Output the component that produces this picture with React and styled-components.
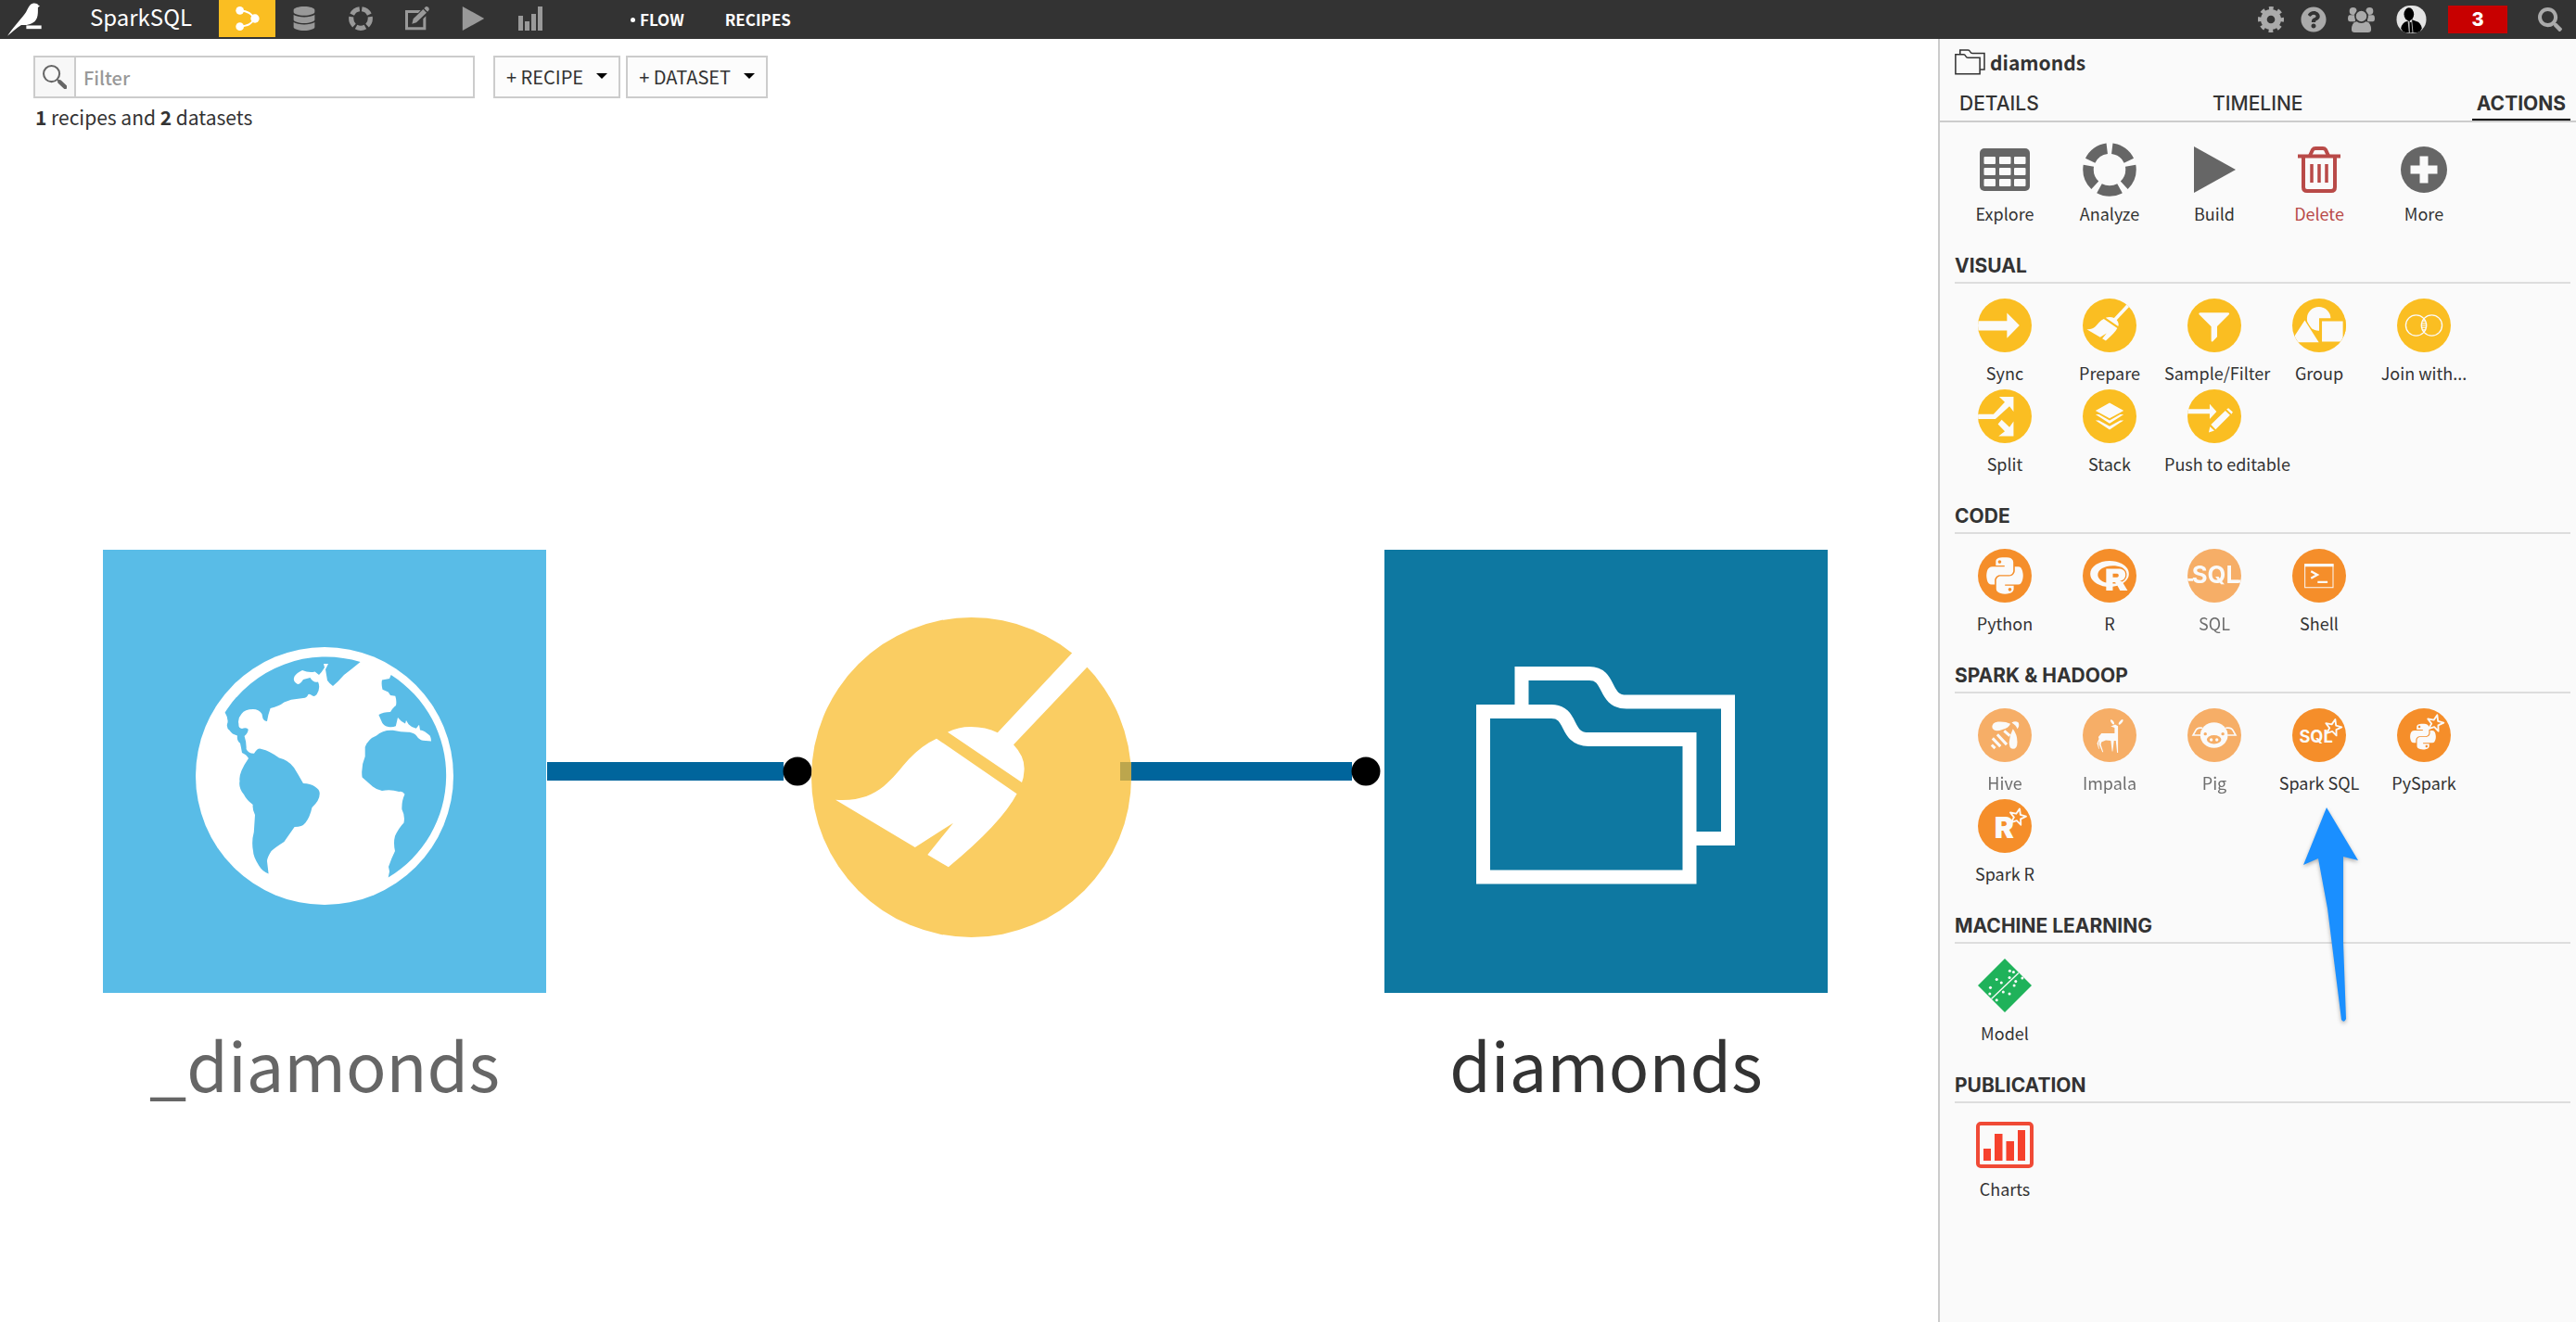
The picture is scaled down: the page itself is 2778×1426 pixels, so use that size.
import React from "react";
import styled, { createGlobalStyle } from "styled-components";
import { FaDatabase, FaPython, FaQuestionCircle, FaRProject, FaSearch } from "react-icons/fa";

const TEXT = `"Noto Sans CJK SC", "Noto Sans", sans-serif`;
const DISPLAY = `Inter, "Open Sans", sans-serif`;
const PAPER = "#fafafa";
const YELLOW = "#fabe22";
const ORANGE = "#f58e2a";

const GlobalStyle = createGlobalStyle`
  *, *::before, *::after { box-sizing: border-box; }
  body { margin: 0; background: #fff; color: #333; font-family: ${TEXT}; font-size: 20px; }
  button { font: inherit; color: inherit; background: none; border: 0; padding: 0; cursor: pointer; }
  a { color: inherit; text-decoration: none; }
  svg { display: block; }
`;

const Page = styled.div`
  display: flex;
  flex-direction: column;
  min-height: 100vh;
`;

/* ---------- header ---------- */

const Header = styled.header`
  display: flex;
  align-items: center;
  height: 42px;
  background: #333;
  color: #fff;
`;

const Logo = styled.a`
  display: flex;
  width: 97px;
  padding-left: 8px;
`;

const Project = styled.a`
  width: 139px;
  font-size: 24px;
  line-height: 36px;
  align-self: flex-start;
`;

const Modes = styled.nav`
  display: flex;
  align-self: flex-start;
`;

const Mode = styled.button`
  display: flex;
  align-items: center;
  justify-content: center;
  width: 61px;
  height: 40px;
  color: ${(p) => (p.$active ? "#fff" : "#999")};
  background: ${(p) => (p.$active ? YELLOW : "transparent")};
`;

const Views = styled.nav`
  display: flex;
  gap: 44px;
  margin-left: 78px;
`;

const View = styled.a`
  display: flex;
  align-items: center;
  gap: 5px;
  font-size: 17px;
  font-weight: 700;
  line-height: 40px;
`;

const ViewDot = styled.span`
  width: 5px;
  height: 5px;
  border-radius: 50%;
  background: #fff;
`;

const Tools = styled.div`
  display: flex;
  align-items: center;
  gap: 23px;
  margin-left: auto;
  padding-right: 15px;
`;

const ToolPair = styled.div`
  display: flex;
  align-items: center;
  gap: 18px;
`;

const Tool = styled.button`
  display: flex;
  color: #aaa;
`;

const Badge = styled.button`
  width: 64px;
  height: 30px;
  margin-right: 10px;
  background: #c80000;
  color: #fff;
  font-family: ${DISPLAY};
  font-size: 20px;
  font-weight: 800;
`;

/* ---------- main area ---------- */

const Body = styled.div`
  display: flex;
  flex: 1;
`;

const Main = styled.main`
  position: relative;
  flex: 1;
  min-width: 0;
`;

const Toolbar = styled.div`
  display: flex;
  height: 64px;
  padding: 18px 36px 0;
`;

const FilterBox = styled.label`
  display: flex;
  width: 476px;
  height: 46px;
  margin-right: 20px;
  border: 2px solid #ccc;
`;

const FilterIcon = styled.span`
  display: flex;
  align-items: center;
  justify-content: center;
  width: 44px;
  border-right: 2px solid #ccc;
  background: #f7f7f7;
`;

const FilterInput = styled.input`
  flex: 1;
  min-width: 0;
  padding: 0 8px;
  border: 0;
  outline: 0;
  background: #fff;
  color: #333;
  font: 500 20px ${TEXT};
  &::placeholder { color: #999; opacity: 1; }
`;

const NewButton = styled.button`
  display: flex;
  align-items: center;
  gap: 14px;
  height: 46px;
  margin-right: 6px;
  padding: 0 12px 2px;
  border: 2px solid #ccc;
  background: #fcfcfc;
  font-size: 20px;
  white-space: nowrap;
`;

const Caret = styled.span`
  border: 6px solid transparent;
  border-top-color: #000;
  border-bottom: 0;
`;

const Summary = styled.p`
  margin: 0;
  padding: 6px 38px;
  font-size: 21px;
  line-height: 28px;
`;

const Links = styled.svg`
  position: absolute;
  left: 590px;
  top: 774px;
`;

const Dataset = styled.figure`
  position: absolute;
  left: ${(p) => p.$left}px;
  top: 551px;
  width: 478px;
  margin: 0;
`;

const DatasetTile = styled.button`
  display: flex;
  align-items: center;
  justify-content: center;
  width: 478px;
  height: 478px;
  padding-top: 10px;
  background: ${(p) => p.$color};
  color: #fff;
`;

const DatasetName = styled.figcaption`
  padding-top: 24px;
  color: ${(p) => p.$color};
  font-size: 72px;
  line-height: 104px;
  text-align: center;
`;

const Recipe = styled.button`
  position: absolute;
  left: 875px;
  top: 624px;
  color: #fff;
`;

/* ---------- side panel ---------- */

const Panel = styled.aside`
  position: relative;
  width: 688px;
  border-left: 2px solid #ccc;
  background: ${PAPER};
`;

const PanelTitle = styled.h1`
  display: flex;
  align-items: center;
  gap: 5px;
  height: 50px;
  margin: 0;
  padding-left: 16px;
  font-size: 21px;
  font-weight: 700;
  line-height: 50px;
`;

const Tabs = styled.div`
  display: flex;
  justify-content: space-between;
  padding: 0 6px 0 16px;
  border-bottom: 2px solid #ccc;
`;

const Tab = styled.button`
  height: 38px;
  padding: 2px 5px 0;
  border-bottom: 2px solid ${(p) => (p.$active ? "#000" : "transparent")};
  font-family: ${DISPLAY};
  font-size: 21px;
  font-weight: ${(p) => (p.$active ? 700 : 500)};
`;

const Sections = styled.div`
  padding: 6px 6px 0 16px;
`;

const SectionTitle = styled.h2`
  margin: 0;
  padding: 26px 0 4px;
  border-bottom: 2px solid #ddd;
  font-family: ${DISPLAY};
  font-size: 21px;
  font-weight: 700;
  line-height: 26px;
`;

const Grid = styled.div`
  display: grid;
  grid-template-columns: repeat(auto-fill, 108px);
  column-gap: 5px;
  max-width: 600px;
  padding-top: 16px;
`;

const Action = styled.button`
  display: flex;
  flex-direction: column;
  gap: ${(p) => (p.$tight ? 5 : 9)}px;
  padding-bottom: 5px;
  color: ${(p) => p.$color || "#333"};
  font-size: 18px;
  line-height: 26px;
  white-space: nowrap;
  opacity: ${(p) => (p.disabled ? 0.7 : 1)};
`;

const ActionIcon = styled.span`
  display: flex;
  align-items: center;
  justify-content: center;
  align-self: center;
  height: 58px;
`;

const ActionLabel = styled.span`
  min-width: 108px;
  text-align: center;
`;

const Disc = styled.svg`
  border-radius: 50%;
  background: ${(p) => p.$color};
  color: ${PAPER};
`;

const Gray = styled.span`
  color: #666;
`;

const Pointer = styled.svg`
  position: absolute;
  left: 388px;
  top: 824px;
  pointer-events: none;
  filter: drop-shadow(0 2px 2px rgba(0, 0, 0, 0.3));
`;

/* ---------- drawings ---------- */

const Bird = () => (
  <svg width="38" height="36" viewBox="0 0 112 104" fill="#fff">
    <path d="M0 104 C14 84 38 56 54 36 C62 26 66 12 72 6 C80 -2 94 -1 98 6 L103 9 L97 14 C97 28 98 44 90 54 C82 66 62 70 52 70 L44 70 C30 78 14 94 0 104Z" />
    <path d="M60 71H108V82H60Z" />
  </svg>
);

const FlowIcon = () => (
  <svg width="26" height="26" viewBox="0 0 78 78" fill="#fff">
    <path d="M14 13C42 16 52 24 62 40C52 56 42 62 14 65" fill="none" stroke="#fff" strokeWidth="6" />
    <circle cx="14" cy="13" r="13" />
    <circle cx="63" cy="39" r="14" />
    <circle cx="14" cy="65" r="13" />
  </svg>
);

const Ring = ({ size }) => (
  <svg width={size} height={size} viewBox="0 0 58 58">
    <circle
      cx="29" cy="29" r="23" fill="none" stroke="currentColor" strokeWidth="11.5"
      pathLength="100" strokeDasharray="16 4" strokeDashoffset="-2" transform="rotate(-90 29 29)"
    />
  </svg>
);

const EditIcon = () => (
  <svg width="26" height="26" viewBox="0 0 78 78" fill="currentColor">
    <path d="M0 12H50L42 21H9V67H58V40L67 31V76H0Z" />
    <path d="M22 56L26 40L58 9L69 20L36 52Z M61 6L67 0Q79 1 77 11L72 17Z" />
  </svg>
);

const Triangle = ({ width, height }) => (
  <svg width={width} height={height} viewBox="0 0 45 50" fill="currentColor">
    <path d="M0 0L45 25L0 50Z" />
  </svg>
);

const BarsIcon = () => (
  <svg width="26" height="26" viewBox="0 0 26 26" fill="currentColor">
    <path d="M0 10H5V26H0Z M7 16H12V26H7Z M14 8H19V26H14Z M21 0H26V26H21Z" />
  </svg>
);

const Gear = () => (
  <svg width="28" height="28" viewBox="0 0 84 84" fill="none" stroke="currentColor">
    <circle cx="42" cy="42" r="23" strokeWidth="20" />
    <circle
      cx="42" cy="42" r="36" strokeWidth="12"
      pathLength="80" strokeDasharray="5 5" strokeDashoffset="2.500"
    />
  </svg>
);

const People = () => (
  <svg width="29" height="27" viewBox="0 0 88 82" fill="currentColor">
    <circle cx="17" cy="12" r="12" />
    <circle cx="71" cy="12" r="12" />
    <path d="M6 25H24V46H6Q0 46 0 38Q0 25 6 25Z M82 25H64V46H82Q88 46 88 38Q88 25 82 25Z" />
    <path d="M28 46H60Q76 50 76 72Q76 82 66 82H22Q12 82 12 72Q12 50 28 46Z" />
    <circle cx="44" cy="29" r="20" stroke="#333" strokeWidth="5" />
  </svg>
);

const Avatar = () => (
  <svg width="33" height="30" viewBox="0 0 96 90">
    <rect width="96" height="90" rx="44" fill="#e4e4e4" />
    <path d="M14 74Q18 54 34 51L42 46L52 88H30Q18 84 14 74Z M82 74Q78 54 64 51L50 46L46 88H66Q78 84 82 74Z" fill="#000" />
    <ellipse cx="40" cy="28" rx="16" ry="21" fill="#000" />
    <path d="M36 48L44 54L50 48L54 88H40Z" fill="#bbb" />
    <path d="M42 54H48L51 88H43Z" fill="#000" />
  </svg>
);

const Magnifier = () => (
  <svg width="26" height="26" viewBox="0 0 76 76">
    <circle cx="28" cy="28" r="25" fill="none" stroke="#666" strokeWidth="6" />
    <path d="M47 47L54 54" stroke="#666" strokeWidth="6" />
    <path d="M54 54L71 70" stroke="#666" strokeWidth="13" strokeLinecap="round" />
  </svg>
);

const Folders = ({ width, height, stroke }) => (
  <svg width={width} height={height} viewBox="0 0 280 236" fill="none" stroke="currentColor" strokeWidth={stroke}>
    <path d="M49 44V7.5H122C146 7.5 136 38 162 38H271.500V185.500H230" />
    <path d="M7.500 48.500H81C105 48.500 95 78.500 121 78.500H230V227H7.500Z" />
  </svg>
);

const Globe = () => (
  <svg width="278" height="278" viewBox="0 0 278 278">
    <circle cx="139" cy="139" r="139" fill="#fff" />
    <g fill="#59bce7">
      <path d="M31.600 70.600A128.500 128.500 0 0 1 177.600 16L169 23L160 30Q154 37 148 42Q144 39 142 36L140 24L143 18H138L139 22Q136 27 133 30L128.600 26.500Q122 28 115 25Q109 28 106.600 31.400Q104 37 110 40Q113 40 116 35L123.500 33Q127 39 132 37.500Q135 44 130.600 51Q128 54 126 52.600Q123 50 121.400 51Q120 55 116 55L103 56.700L95.400 59.600Q90 64 80.600 66Q78 73 77 80Q74 80 72.500 77L71.400 72Q68 67 62 67Q53 67 49.500 72Q45 77 46.400 83Q46 88 50 88Q54 86 56.600 88.600Q57 92 52.600 96Q55 103 54.600 110Q57 115 63 114.700Q67 108 71 110Q80 112 90 119.600Q100 122 106 130Q111 138 116 147Q124 147 128.600 150.600Q134 154 133.700 158Q134 165 125.500 173Q123 184 118.400 189.400Q115 194 106.600 194Q101 202 95.400 210Q86 216 81.600 220Q77 227 77 231L78.600 244.500Q72 242 68.400 236Q62 226 62 220Q60 210 62.800 199.600L64 181Q61 175 61.700 170Q55 165 52 159Q46 152 47.500 144.500Q46 136 57 120Q55 116 50 114Q49 108 48 103.700Q44 101 45 95.500Q39 94 36.700 90Q33 87 34 83Q36 78 31.600 70.600Z" />
      <path d="M210.700 30A128.500 128.500 0 0 1 207.700 248.600L209 242L208 237Q211 228 215 220Q213 211 215 203.700Q219 195 224.500 189.400Q226 182 222.400 175Q222 166 225.500 158.800Q223 155 219.400 156Q210 153 201 155Q195 154 191 150.600Q185 145 179.600 140.400Q178 129 182.700 118V107.800Q186 99 195 95.500Q202 89 212.800 89.800Q222 92 230.600 91.800Q236 93 238 95.500Q241 100 245 100.800L254 101.600Q254 98 252.600 95.500Q247 90 242 89.400L241 83.700L237.800 87.800Q233 87 229.600 83.300L227 79L226 82.400Q221 80 218 76L215.800 85.300Q212 87 207.700 86Q202 85 200 79L197.400 73Q202 70 210 70Q213 65 216 63Q217 58 215.300 52.700L210 52L207.700 48.600L201.500 45.700Q200 40 201 35.500L209 34Z" />
    </g>
  </svg>
);

// The broom is drawn on a 345 unit square, the same as the recipe disc.
const BroomShape = () => (
  <>
    <path d="M200.800 124.300L280.800 38.700L296 20L318 34L297 54L218 137.300Q231 151 229.400 166Q229 173 227 178L147 123.700Q158 118 172 118Q188 118 200.800 124.300Z" />
    <path d="M135 130.700L221.600 190.300Q205 222 147.800 269.300L125.300 256L153 221.700L111.800 248L26 196.700C72 200 86 174 105 153Q119 138 135 130.700Z" />
  </>
);

const Star = ({ x, y, color = ORANGE }) => (
  <path
    transform={`translate(${x} ${y}) rotate(14)`}
    d="M0 -27L7 -9L26 -8L11 4L16 22L0 12L-16 22L-11 4L-26 -8L-7 -9Z"
    fill={color} stroke="currentColor" strokeWidth="5.500" strokeLinejoin="round"
  />
);

const Mark = ({ children, ...rest }) => (
  <text fill="currentColor" fontFamily="Inter, sans-serif" fontWeight="700" textAnchor="middle" {...rest}>
    {children}
  </text>
);

const discs = {
  sync: <path d="M0 72H93V46L133 86L93 127V102H0Z" />,
  prepare: <g transform="scale(0.5)"><BroomShape /></g>,
  filter: <path d="M41 45H129Q137 46 132 52L95 89V122L81 137Q76 140 76 135V90L38 52Q34 46 41 45Z" />,
  group: (
    <>
      <circle cx="85" cy="65" r="38" />
      <path d="M40 62L92 144H-14Z M86 63H172V146H86Z" fill={YELLOW} />
      <path d="M40 70L85 140H-6Z M95 73H162V138H95Z" />
    </>
  ),
  join: (
    <g fill="none" stroke="currentColor" strokeWidth="4">
      <circle cx="61" cy="86" r="33" />
      <circle cx="111" cy="86" r="33" />
      <path d="M80 72H92M78 79H94M78 86H94M78 93H94M80 100H92" strokeWidth="3" />
    </g>
  ),
  split: (
    <>
      <path d="M0 79H50L86 41L68 24H114V71L101 54L56 95H0Z" />
      <path d="M76 97L101 121L114 102V150H66L86 134L64 111Z" />
    </>
  ),
  stack: <path d="M86 43L131 68L86 93L41 68Z M41 80H52L86 99L120 80H131L86 109Z M41 99H52L86 118L120 99H131L86 129Z" />,
  push: (
    <>
      <path d="M0 63H71V47L93 71L71 95V78H0Z" />
      <path d="M68 138L72 119L86 132Z M75 113L121 68L136 82L90 128Z M125 64L131 60L145 73L141 79Z" />
    </>
  ),
  python: <FaPython x="19" y="19" size="134" />,
  r: <FaRProject x="24" y="24" size="124" />,
  sql: (
    <>
      <Mark x="90" y="109" fontSize="76">SQL</Mark>
      <path d="M0 95H18V103H0Z M130 99H172V109H130Z" />
    </>
  ),
  shell: (
    <>
      <path d="M39 48H132V57H39Z M81 103H113V110H81Z" />
      <path d="M40.500 50H130.500V124H40.500Z" fill="none" stroke="currentColor" strokeWidth="3" />
      <path d="M60 72L80 83L60 94" fill="none" stroke="currentColor" strokeWidth="7" />
    </>
  ),
  hive: (
    <>
      <path d="M46 63Q44 45 64 43Q88 41 104 50Q98 64 78 68Q54 78 46 63Z" />
      <path d="M108 46Q120 38 130 46Q134 58 126 66Q122 54 108 46Z" />
      <path d="M112 66Q126 84 126 108Q126 130 112 130Q99 128 100 108Q102 84 112 66Z" />
      <path d="M62 84L92 116M47 96L72 122M44 117L55 128M84 72L102 88" fill="none" stroke="currentColor" strokeWidth="9" />
    </>
  ),
  impala: (
    <>
      <ellipse cx="95" cy="44" rx="4" ry="9" transform="rotate(-35 95 44)" />
      <ellipse cx="122" cy="44" rx="4" ry="10" transform="rotate(40 122 44)" />
      <path d="M90 58L104 52L113 57V142H110L106 104H100L96 138H94L90 104L74 102L60 108L58 116L66 140H63L52 114L54 104L50 112L53 130H51L46 112L52 98L50 92L60 80H102V62Z" />
    </>
  ),
  pig: (
    <>
      <ellipse cx="85" cy="86" rx="44" ry="41" />
      <path d="M48 63Q30 60 26 72L18 86H42M122 63Q142 60 146 72L154 86H128" fill="none" stroke="currentColor" strokeWidth="5" />
      <g fill={ORANGE}>
        <circle cx="57" cy="82" r="5" />
        <circle cx="113" cy="82" r="5" />
        <ellipse cx="85" cy="100" rx="23" ry="14" />
      </g>
      <circle cx="76" cy="101" r="5" />
      <circle cx="94" cy="101" r="5" />
    </>
  ),
  sparkSql: (
    <>
      <Mark x="76" y="109" fontSize="54">SQL</Mark>
      <Star x={131} y={62} />
    </>
  ),
  pySpark: (
    <>
      <FaPython x="36" y="44" size="94" />
      <Star x={122} y={48} />
    </>
  ),
  sparkR: (
    <>
      <Mark x="84" y="126" fontSize="94" fontWeight="900">R</Mark>
      <Star x={127} y={57} />
    </>
  ),
};

const DiscIcon = ({ name, color }) => (
  <Disc width="58" height="58" viewBox="0 0 172 172" fill="currentColor" $color={color}>
    {discs[name]}
  </Disc>
);

const TableIcon = () => (
  <svg width="54" height="46" viewBox="0 0 54 46">
    <rect width="54" height="46" rx="5" fill="#666" />
    <g fill={PAPER}>
      {[9, 21, 33].map((y) => [4.5, 21, 37].map((x) => <rect key={`${x}-${y}`} x={x} y={y} width="12.500" height="8" rx="1" />))}
    </g>
  </svg>
);

const TrashIcon = () => (
  <svg width="46" height="50" viewBox="0 0 46 50" fill="none" stroke="currentColor">
    <path d="M0 10.500H46" strokeWidth="4" />
    <path d="M13 10L16 3.500Q17 2 19 2H27Q29 2 30 3.500L33 10M6 12V44Q6 48 10 48H36Q40 48 40 44V12" strokeWidth="4" />
    <path d="M15 19V39M23 19V39M31 19V39" strokeWidth="3.500" />
  </svg>
);

const MoreIcon = () => (
  <svg width="50" height="50" viewBox="0 0 50 50">
    <circle cx="25" cy="25" r="25" fill="#666" />
    <path d="M25 10.500V39.500M10.500 25H39.500" stroke={PAPER} strokeWidth="9" />
  </svg>
);

const modelDots = [
  [40, 93], [38, 113], [60, 67], [75, 77], [102, 39], [114, 43], [101, 61],
  [142, 62], [121, 73], [116, 86], [81, 107], [101, 113], [60, 133],
];

const ModelIcon = () => (
  <svg width="58" height="58" viewBox="0 0 172 172">
    <path d="M86 0L172 86L86 172L0 86Z" fill="#1fb25a" />
    <path d="M43 129L130 46" stroke={PAPER} strokeWidth="4" />
    {modelDots.map(([x, y]) => <circle key={`${x}-${y}`} cx={x} cy={y} r="4.500" fill={PAPER} />)}
  </svg>
);

const ChartsIcon = () => (
  <svg width="62" height="50" viewBox="0 0 62 50" fill="#f6412d">
    <rect x="2" y="2" width="58" height="46" rx="3" fill="none" stroke="#f04a36" strokeWidth="4" />
    <path d="M8 29H16V42H8Z M20 13H28.500V42H20Z M32.500 21H41V42H32.500Z M45 9H53V42H45Z" />
  </svg>
);

/* ---------- content ---------- */

const yellow = (name) => <DiscIcon name={name} color={YELLOW} />;
const orange = (name) => <DiscIcon name={name} color={ORANGE} />;

const sections = [
  {
    actions: [
      { label: "Explore", icon: <TableIcon />, tight: true },
      { label: "Analyze", icon: <Gray><Ring size={58} /></Gray>, tight: true },
      { label: "Build", icon: <Gray><Triangle width={45} height={50} /></Gray>, tight: true },
      { label: "Delete", icon: <TrashIcon />, tight: true, color: "#b94a48" },
      { label: "More", icon: <MoreIcon />, tight: true },
    ],
  },
  {
    title: "VISUAL",
    actions: [
      { label: "Sync", icon: yellow("sync") },
      { label: "Prepare", icon: yellow("prepare") },
      { label: "Sample/Filter", icon: yellow("filter") },
      { label: "Group", icon: yellow("group") },
      { label: "Join with...", icon: yellow("join") },
      { label: "Split", icon: yellow("split") },
      { label: "Stack", icon: yellow("stack") },
      { label: "Push to editable", icon: yellow("push") },
    ],
  },
  {
    title: "CODE",
    actions: [
      { label: "Python", icon: orange("python") },
      { label: "R", icon: orange("r") },
      { label: "SQL", icon: orange("sql"), disabled: true },
      { label: "Shell", icon: orange("shell") },
    ],
  },
  {
    title: "SPARK & HADOOP",
    actions: [
      { label: "Hive", icon: orange("hive"), disabled: true },
      { label: "Impala", icon: orange("impala"), disabled: true },
      { label: "Pig", icon: orange("pig"), disabled: true },
      { label: "Spark SQL", icon: orange("sparkSql") },
      { label: "PySpark", icon: orange("pySpark") },
      { label: "Spark R", icon: orange("sparkR") },
    ],
  },
  { title: "MACHINE LEARNING", actions: [{ label: "Model", icon: <ModelIcon /> }] },
  { title: "PUBLICATION", actions: [{ label: "Charts", icon: <ChartsIcon />, tight: true }] },
];

const modes = [
  { label: "Flow", icon: <FlowIcon />, active: true },
  { label: "Datasets", icon: <FaDatabase size={26} /> },
  { label: "Analyses", icon: <Ring size={26} /> },
  { label: "Notebooks", icon: <EditIcon /> },
  { label: "Jobs", icon: <Triangle width={25} height={26} /> },
  { label: "Insights", icon: <BarsIcon /> },
];

export default function App() {
  return (
    <Page>
      <GlobalStyle />
      <Header>
        <Logo href="#home" aria-label="Home"><Bird /></Logo>
        <Project href="#project">SparkSQL</Project>
        <Modes>
          {modes.map((m) => (
            <Mode key={m.label} aria-label={m.label} $active={m.active}>{m.icon}</Mode>
          ))}
        </Modes>
        <Views>
          <View href="#flow"><ViewDot />FLOW</View>
          <View href="#recipes">RECIPES</View>
        </Views>
        <Tools>
          <ToolPair>
            <Tool aria-label="Settings"><Gear /></Tool>
            <Tool aria-label="Help"><FaQuestionCircle size={28} /></Tool>
          </ToolPair>
          <Tool aria-label="Community"><People /></Tool>
          <Tool aria-label="Profile"><Avatar /></Tool>
          <Badge>3</Badge>
          <Tool aria-label="Search"><FaSearch size={26} /></Tool>
        </Tools>
      </Header>

      <Body>
        <Main>
          <Toolbar>
            <FilterBox>
              <FilterIcon><Magnifier /></FilterIcon>
              <FilterInput type="text" placeholder="Filter" aria-label="Filter" />
            </FilterBox>
            <NewButton>+ RECIPE <Caret /></NewButton>
            <NewButton>+ DATASET <Caret /></NewButton>
          </Toolbar>
          <Summary><b>1</b> recipes and <b>2</b> datasets</Summary>

          <Links width="903" height="32" viewBox="0 0 903 32">
            <path d="M0 16H255M630 16H868" stroke="#00659c" strokeWidth="20" />
            <circle cx="270" cy="16" r="15.500" />
            <circle cx="883" cy="16" r="15.500" />
          </Links>
          <Dataset $left={111}>
            <DatasetTile $color="#59bce7" aria-label="_diamonds"><Globe /></DatasetTile>
            <DatasetName $color="#666">_diamonds</DatasetName>
          </Dataset>
          <Recipe aria-label="Prepare recipe">
            <svg width="345" height="345" viewBox="0 0 345 345" fill="currentColor">
              <circle cx="172.500" cy="172.500" r="172.500" fill="#facd62" />
              <BroomShape />
              <path d="M333 156H345V176H333Z" fill="#bca64d" />
            </svg>
          </Recipe>
          <Dataset $left={1493}>
            <DatasetTile $color="#0e78a1" aria-label="diamonds"><Folders width={280} height={236} stroke={15} /></DatasetTile>
            <DatasetName $color="#333">diamonds</DatasetName>
          </Dataset>
        </Main>

        <Panel>
          <PanelTitle><Folders width={33} height={28} stroke={13} />diamonds</PanelTitle>
          <Tabs role="tablist">
            <Tab role="tab">DETAILS</Tab>
            <Tab role="tab">TIMELINE</Tab>
            <Tab role="tab" $active>ACTIONS</Tab>
          </Tabs>
          <Sections>
            {sections.map((s, i) => (
              <section key={i}>
                {s.title && <SectionTitle>{s.title}</SectionTitle>}
                <Grid>
                  {s.actions.map((a) => (
                    <Action key={a.label} disabled={a.disabled} $tight={a.tight} $color={a.color}>
                      <ActionIcon>{a.icon}</ActionIcon>
                      <ActionLabel>{a.label}</ActionLabel>
                    </Action>
                  ))}
                </Grid>
              </section>
            ))}
          </Sections>
          <Pointer width="64" height="240" viewBox="0 0 64 240">
            <path d="M29 5L63 62L47 58L47 150L50 233Q48 238 45 234L30 114L20 60L4 67Z" fill="#1a8fff" />
          </Pointer>
        </Panel>
      </Body>
    </Page>
  );
}
